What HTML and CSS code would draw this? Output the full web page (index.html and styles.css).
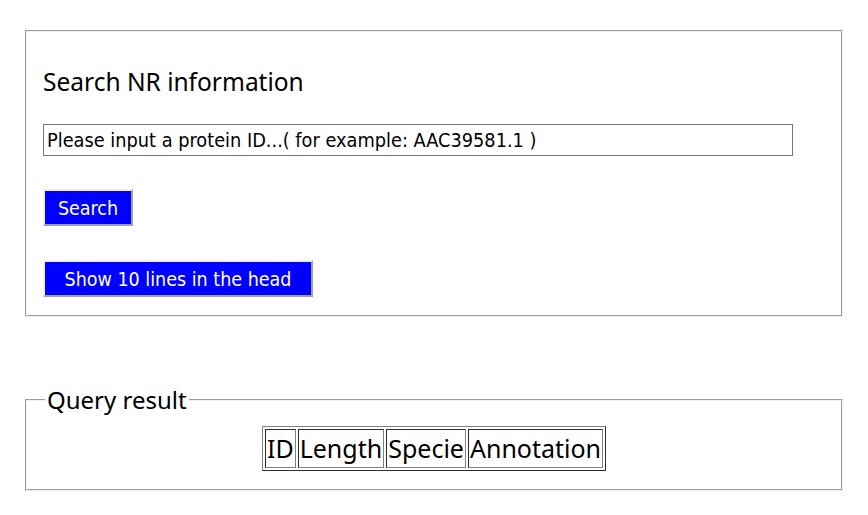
FILE: index.html
```html
<!DOCTYPE html>
<html lang="en">
<head>
<meta charset="utf-8">
<title>Search NR information</title>
<link rel="stylesheet" href="styles.css">
</head>
<body>
<div class="page">
  <div class="panel search-panel">
    <h2 class="title">Search NR information</h2>
    <input class="query" type="text" value="Please input a protein ID...( for example: AAC39581.1 )">
    <button class="btn btn-search" type="button">Search</button>
    <button class="btn btn-head" type="button">Show 10 lines in the head</button>
  </div>
  <fieldset class="panel result-panel">
    <legend class="result-legend">Query result</legend>
    <table class="result-table">
      <tr>
        <th>ID</th>
        <th>Length</th>
        <th>Specie</th>
        <th>Annotation</th>
      </tr>
    </table>
  </fieldset>
</div>
</body>
</html>
```

FILE: styles.css
```css
html, body {
  margin: 0;
  padding: 0;
  background: #ffffff;
}

.page {
  padding: 30px 25px 0 25px;
  font-family: "Noto Sans", "Open Sans", sans-serif;
  color: #000;
}

.panel {
  border: 2px groove #f0f0f0;
  margin: 0;
}

.search-panel {
  display: flex;
  flex-direction: column;
  align-items: flex-start;
  padding: 34px 16px 18px 16px;
}

.title {
  margin: 0;
  font-size: 24.5px;
  line-height: 32px;
  font-weight: normal;
}

.query {
  box-sizing: border-box;
  margin: 26px 0 0 0;
  width: 750px;
  height: 32px;
  padding: 0 3px;
  border: 1px solid #767676;
  font-family: "DejaVu Sans Condensed", "DejaVu Sans", sans-serif;
  font-stretch: condensed;
  font-size: 19.75px;
  color: #000;
  background: #fff;
}

.btn {
  box-sizing: border-box;
  height: 37px;
  padding: 2px 0 0 0;
  border: 2px solid;
  border-color: #f0f0f0 #a0a0a0 #a0a0a0 #f0f0f0;
  background: #0000ff;
  color: #fff;
  font-family: "DejaVu Sans Condensed", "DejaVu Sans", sans-serif;
  font-stretch: condensed;
  font-size: 19.5px;
  text-align: center;
}

.btn-search {
  margin-top: 33px;
  width: 90px;
}

.btn-head {
  margin-top: 34px;
  width: 270px;
}

.result-panel {
  margin-top: 67px;
  padding: 10px 18px 18px 18px;
}

.result-legend {
  padding: 0 2px;
  font-size: 24px;
  line-height: 32px;
}

.result-table {
  margin: 0 auto;
  border: 1px outset #808080;
  border-spacing: 2px;
}

.result-table th {
  border: 1px inset #808080;
  padding: 1px;
  font-weight: normal;
  font-size: 25px;
  line-height: 35px;
}
```
